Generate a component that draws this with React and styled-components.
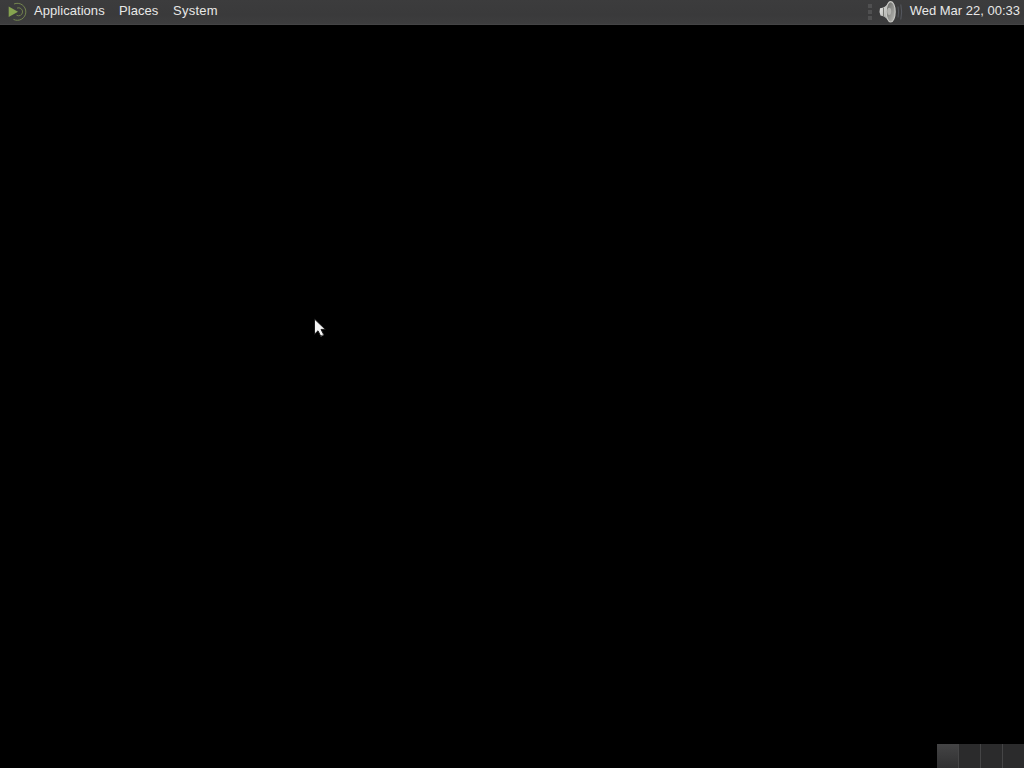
import React from 'react';
import styled, { createGlobalStyle } from 'styled-components';

const GlobalStyle = createGlobalStyle`
  * { box-sizing: border-box; }
  body { margin: 0; background: #000; overflow: hidden; }
`;

const Desktop = styled.div`
  display: flex;
  flex-direction: column;
  width: 1024px;
  height: 768px;
  background: #000;
  font-family: "Liberation Sans", Arial, sans-serif;
  font-size: 13px;
  cursor: default;
`;

const Panel = styled.header`
  display: flex;
  justify-content: space-between;
  height: 25px;
  flex: none;
  background: linear-gradient(#3c3c3d, #3a3a3b 60%, #3d3d3e);
  border-bottom: 1px solid #444445;
  color: #e8e8e7;
  line-height: 21px;
  white-space: nowrap;
`;

const MenuBar = styled.nav`
  display: flex;
  padding-left: 7px;
`;

const MenuItem = styled.span`
  width: ${({ $width }) => $width}px;
  letter-spacing: ${({ $tracking = 0.05 }) => $tracking}px;
`;

const Tray = styled.div`
  display: flex;
  padding-right: 4px;
`;

const Clock = styled.time`
  margin-left: 7px;
`;

const Icon = styled.svg`
  display: block;
  flex: none;
`;

const Workspace = styled.main`
  position: relative;
  flex: 1;
`;

const Pointer = styled(Icon)`
  position: absolute;
  left: 312px;
  top: 291px;
`;

const Switcher = styled.footer`
  display: flex;
  align-self: flex-end;
  width: 87px;
  height: 24px;
  gap: 1px;
  background: #454546;
`;

const WorkspaceCell = styled.div`
  flex: 1;
  background: ${({ $active }) => ($active ? 'linear-gradient(#444445, #303031)' : '#2b2b2c')};
`;

function Logo() {
  return (
    <Icon width="27" height="24" viewBox="0 0 27 24" fill="none">
      <path d="M1.7 6.6 11 11.8 1.7 17Z" fill="#86a350" />
      <path d="M10 8.1A4 4 0 1 1 9.5 15.2" stroke="#75874f" strokeWidth=".9" />
      <path d="M7 4A8.5 8.5 0 1 1 6.5 19.4" stroke="#74864f" strokeWidth="1" />
    </Icon>
  );
}

function Grip() {
  return (
    <Icon width="10" height="24" viewBox="0 0 10 24" fill="#505051">
      <rect x="1" y="4" width="4" height="4" />
      <rect x="1" y="10" width="4" height="4" />
      <rect x="1" y="16" width="4" height="4" />
    </Icon>
  );
}

function Speaker() {
  return (
    <Icon width="26" height="24" viewBox="0 0 26 24">
      <defs>
        <linearGradient id="horn" x1="0" x2="1" y1="0" y2="1">
          <stop offset="0" stopColor="#f2f2f0" />
          <stop offset="1" stopColor="#92938f" />
        </linearGradient>
        <linearGradient id="bowl" x1="0" x2="1" y1="0" y2="1">
          <stop offset="0" stopColor="#656663" />
          <stop offset="1" stopColor="#bcbcb8" />
        </linearGradient>
      </defs>
      <path d="M3 8.2 6.5 7.5Q9.5 6 13 1V22.5Q9.5 18 7 16.5L3.5 15.5Q1.8 12 3 8.2Z" fill="url(#horn)" />
      <path d="M6.5 8V16" stroke="#73746f" />
      <ellipse cx="13.7" cy="11.8" rx="4.5" ry="10.2" fill="url(#bowl)" stroke="#c9c9c5" strokeWidth="1.1" />
      <ellipse cx="12.2" cy="11.3" rx="2" ry="3.6" fill="#b3b3af" />
      <path d="M21 6.5Q22.2 12 21 17.5M23.8 4.5Q25.5 12 23.8 19.5" fill="none" stroke="#55585f" />
    </Icon>
  );
}

export default function App() {
  return (
    <>
      <GlobalStyle />
      <Desktop>
        <Panel>
          <MenuBar>
            <Logo />
            <MenuItem $width={85}>Applications</MenuItem>
            <MenuItem $width={54}>Places</MenuItem>
            <MenuItem $width={46} $tracking={0.25}>System</MenuItem>
          </MenuBar>
          <Tray>
            <Grip />
            <Speaker />
            <Clock>Wed Mar 22, 00:33</Clock>
          </Tray>
        </Panel>
        <Workspace>
          <Pointer width="16" height="22" viewBox="0 0 16 22">
            <path d="M2.5 3V18.2L6 14.8 8.7 20.2 11.8 18.7 9 13.4H13.3Z" fill="#f5f5f5" stroke="#1b1b1b" strokeWidth="1" />
            <path d="M8.8 20.3 11.8 18.7" stroke="#777" strokeWidth="1" />
          </Pointer>
        </Workspace>
        <Switcher>
          <WorkspaceCell $active />
          <WorkspaceCell />
          <WorkspaceCell />
          <WorkspaceCell />
        </Switcher>
      </Desktop>
    </>
  );
}
